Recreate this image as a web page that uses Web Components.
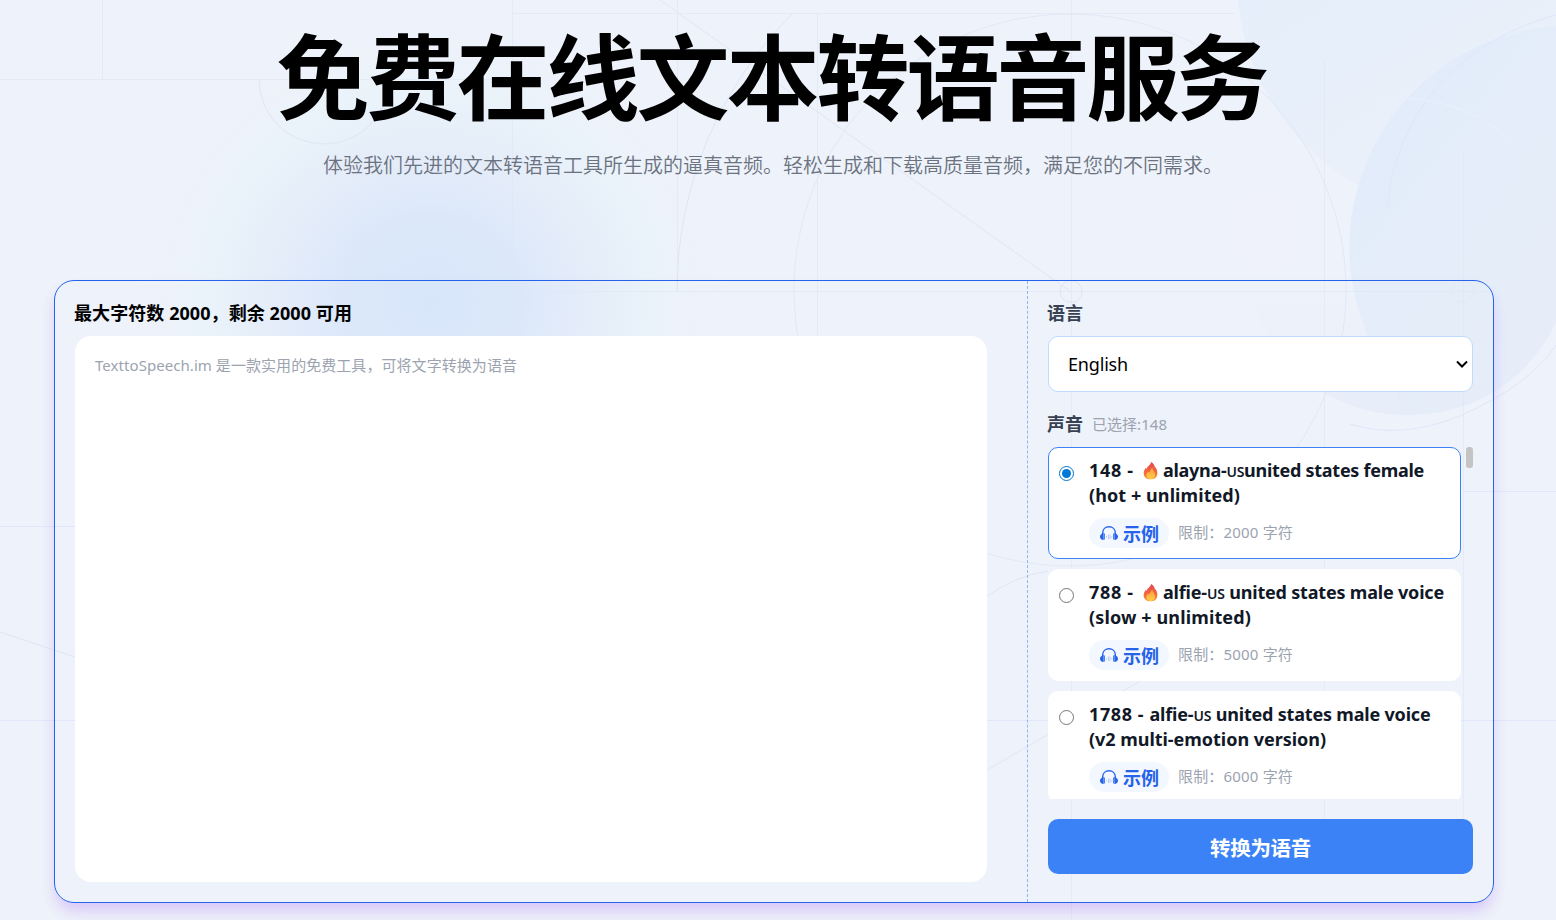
<!DOCTYPE html>
<html lang="zh-CN">
<head>
<meta charset="utf-8">
<title>免费在线文本转语音服务</title>
<style>
  body {
    margin: 0;
    width: 1556px;
    height: 920px;
    overflow: hidden;
    background: #eef2fa;
    font-family: "Noto Sans", "Noto Sans CJK SC", sans-serif;
  }
</style>
</head>
<body>
<tts-page>
  <tts-hero>
    <fit-text slot="title" width="990">免费在线文本转语音服务</fit-text>
    <fit-text slot="subtitle" width="900">体验我们先进的文本转语音工具所生成的逼真音频。轻松生成和下载高质量音频，满足您的不同需求。</fit-text>
  </tts-hero>
  <tts-card>
    <tts-editor slot="editor">
      <fit-text slot="label" width="278">最大字符数 2000，剩余 2000 可用</fit-text>
      <fit-text width="422">TexttoSpeech.im 是一款实用的免费工具，可将文字转换为语音</fit-text>
    </tts-editor>
    <tts-language slot="settings" label="语言"><fit-text width="60">English</fit-text></tts-language>
    <tts-voices slot="settings" label="声音" selected="148">
      <voice-item number="148" hot checked name="alayna-" rest="united states female" w1="261" line2="(hot + unlimited)" w2="151" limit="2000"></voice-item>
      <voice-item number="788" hot name="alfie-" rest=" united states male voice" w1="281" line2="(slow + unlimited)" w2="162" limit="5000"></voice-item>
      <voice-item number="1788" name="alfie-" rest=" united states male voice" w1="281" line2="(v2 multi-emotion version)" w2="237" limit="6000"></voice-item>
    </tts-voices>
    <tts-button slot="settings"><fit-text width="101">转换为语音</fit-text></tts-button>
  </tts-card>
</tts-page>

<script>
class BaseElement extends HTMLElement {
  constructor() {
    super();
    this._shadowRoot = this.attachShadow({ mode: 'open' });
  }

  connectedCallback() {
    this.render();
  }

  attr(name) {
    return this.getAttribute(name) || '';
  }
}

class TtsPage extends BaseElement {
  render() {
    this._shadowRoot.innerHTML = `
      <style>
        :host {
          display: flex;
          flex-direction: column;
          align-items: center;
          position: relative;
          box-sizing: border-box;
          width: 1556px;
          height: 920px;
          padding-right: 8px;
          overflow: hidden;
        }
        page-backdrop {
          position: absolute;
          inset: 0;
          z-index: -1;
        }
      </style>
      <page-backdrop></page-backdrop>
      <slot></slot>
    `;
  }
}

class PageBackdrop extends BaseElement {
  render() {
    this._shadowRoot.innerHTML = `
      <style>
        :host { display: block; }
        svg { display: block; }
      </style>
      <svg width="1556" height="920" viewBox="0 0 1556 920" fill="none">
        <defs>
          <radialGradient id="glow">
            <stop offset="0" stop-color="#d8e6fa"/>
            <stop offset=".3" stop-color="#dce8fa"/>
            <stop offset=".5" stop-color="#e4ecf9"/>
            <stop offset=".78" stop-color="#ebf3fa"/>
            <stop offset="1" stop-color="#eef2fa" stop-opacity="0"/>
          </radialGradient>
          <linearGradient id="top" x1="0" y1="0" x2=".6" y2="1">
            <stop offset="0" stop-color="#e3eefb"/>
            <stop offset=".6" stop-color="#e7effa"/>
            <stop offset="1" stop-color="#edf2fa"/>
          </linearGradient>
          <linearGradient id="ball" x1="0" y1="0" x2=".7" y2="1">
            <stop offset="0" stop-color="#dfeafb"/>
            <stop offset=".5" stop-color="#e4edf9"/>
            <stop offset="1" stop-color="#e6edf9"/>
          </linearGradient>
          <linearGradient id="ring" x1="0" y1="0" x2="0" y2="1">
            <stop offset=".6" stop-color="#e8eff9" stop-opacity="0"/>
            <stop offset="1" stop-color="#e6edf9"/>
          </linearGradient>
        </defs>
        <ellipse cx="430" cy="300" rx="300" ry="280" fill="url(#glow)"/>
        <circle cx="1475" cy="-22" r="238" fill="url(#top)"/>
        <circle cx="1405" cy="257" r="158" fill="url(#ring)"/>
        <path d="M1556 26A222 222 0 0 0 1398 386L1398 414A158 158 0 0 0 1556 322Z" fill="url(#ball)"/>
        <circle cx="1264" cy="230" r="42" fill="#f0f2fa" opacity=".6"/>
        <g stroke="#dfe6f4">
          <path d="M0 79.500H500M512 13.500H1235M540 291.500H1490" opacity=".65"/>
          <path d="M0 526.500H75M0 720.500H1556M1463 491.500H1556" stroke="#dde4fa" opacity=".8"/>
          <path d="M102.500 0V79M512.500 0V335M677.500 0V291M817.500 13V335M1071.500 0V920M1324.500 60V820M1463.500 150V820" opacity=".6"/>
          <path d="M660 0L1071 292M0 632L75 657M987 770L1140 681"/>
          <path d="M259 79A65 65 0 0 0 389 79"/>
          <circle cx="1070" cy="290" r="276" opacity=".8"/>
          <path d="M677 290A393 393 0 0 1 793 13M987 596Q1018 575 1048 571"/>
          <circle cx="1071" cy="291.500" r="11"/>
          <circle cx="1463" cy="291.500" r="11" opacity=".6"/>
          <path d="M1556 15C1450 45 1395 120 1387 210M1350 424Q1400 440 1460 416Q1530 385 1556 345" stroke="#dbe5f8" opacity=".9"/>
        </g>
        <path d="M1370 102A158 158 0 0 1 1510 140" stroke="#eaf1fa"/>
      </svg>
    `;
  }
}

// Spreads its text over a given width by adjusting the letter spacing.
// The template stays on one line because the host keeps white space.
class FitText extends BaseElement {
  render() {
    this._shadowRoot.innerHTML = '<style>:host { display: inline-block; white-space: pre; }</style><slot></slot>';
    this.fit();
    requestAnimationFrame(() => this.fit());
  }

  fit() {
    const width = parseFloat(this.getAttribute('width'));
    if (!width) return;
    this.style.letterSpacing = '0px';
    const natural = this.getBoundingClientRect().width;
    const count = [...this.textContent].length;
    this.style.letterSpacing = `${(width - natural) / count}px`;
  }
}

class TtsHero extends BaseElement {
  render() {
    this._shadowRoot.innerHTML = `
      <style>
        :host {
          display: flex;
          flex-direction: column;
          align-items: center;
          height: 280px;
          flex: none;
        }
        h1 {
          margin: 17px 0 0;
          padding-right: 5px;
          height: 120px;
          font-size: 93px;
          line-height: 120px;
          font-weight: 700;
          color: #000;
        }
        p {
          margin: 14px 0 0;
          padding-right: 2px;
          font-size: 20px;
          line-height: 30px;
          font-weight: 350;
          color: #6b7280;
        }
      </style>
      <h1><slot name="title"></slot></h1>
      <p><slot name="subtitle"></slot></p>
    `;
  }
}

class TtsCard extends BaseElement {
  render() {
    this._shadowRoot.innerHTML = `
      <style>
        :host {
          display: flex;
          flex: none;
          box-sizing: border-box;
          width: 1440px;
          height: 623px;
          border: 1px solid #2563eb;
          border-radius: 20px;
          box-shadow: 0 10px 15px -3px rgba(168, 85, 247, .22), 0 8px 14px rgba(139, 92, 246, .07);
        }
        .left {
          box-sizing: border-box;
          width: 973px;
          padding: 20px 40px 20px 20px;
          border-right: 1px dashed #93b4ee;
        }
        .right {
          flex: 1;
          display: flex;
          flex-direction: column;
          padding: 20px 20px 28px;
        }
      </style>
      <div class="left"><slot name="editor"></slot></div>
      <div class="right"><slot name="settings"></slot></div>
    `;
  }
}

class TtsEditor extends BaseElement {
  render() {
    this._shadowRoot.innerHTML = `
      <style>
        :host {
          display: flex;
          flex-direction: column;
          height: 100%;
        }
        .label {
          height: 35px;
          margin-left: -1px;
          font-size: 18px;
          line-height: 25px;
          font-weight: 700;
          color: #000;
        }
        .area {
          flex: 1;
          box-sizing: border-box;
          padding: 17px 20px;
          background: #fff;
          border-radius: 16px;
          font-size: 15px;
          line-height: 25px;
          color: #9ca3af;
        }
      </style>
      <div class="label"><slot name="label"></slot></div>
      <div class="area"><slot></slot></div>
    `;
  }
}

class TtsLanguage extends BaseElement {
  render() {
    this._shadowRoot.innerHTML = `
      <style>
        :host { display: block; }
        label {
          display: block;
          height: 35px;
          margin-left: -1px;
          font-size: 18px;
          line-height: 25px;
          font-weight: 700;
          color: #374151;
        }
        .select {
          display: flex;
          align-items: center;
          justify-content: space-between;
          box-sizing: border-box;
          height: 56px;
          padding: 0 4px 0 19px;
          border: 1px solid #bfdbfe;
          border-radius: 10px;
          background: #fff;
          font-size: 18px;
          color: #000;
        }
      </style>
      <label>${this.attr('label')}</label>
      <div class="select">
        <slot></slot>
        <svg width="12" height="8" viewBox="0 0 12 8" fill="none" stroke="#000" stroke-width="2"><path d="M1 1.500L6 6.500L11 1.500"/></svg>
      </div>
    `;
  }
}

class TtsVoices extends BaseElement {
  render() {
    this._shadowRoot.innerHTML = `
      <style>
        :host { display: block; margin-top: 20px; }
        .head {
          display: flex;
          gap: 9px;
          height: 35px;
          margin-left: -1px;
          line-height: 25px;
        }
        b { font-size: 18px; color: #374151; }
        .count { font-size: 15px; color: #9ca3af; }
        .body {
          display: flex;
          justify-content: space-between;
          height: 352px;
          overflow: hidden;
        }
        .list {
          display: flex;
          flex-direction: column;
          gap: 10px;
          width: 413px;
          border-radius: 0 0 3px 3px;
          overflow: hidden;
        }
        .thumb {
          width: 7px;
          height: 21px;
          border-radius: 3px;
          background: #c4c4c4;
        }
      </style>
      <div class="head">
        <b>${this.attr('label')}</b>
        <span class="count"><fit-text width="75">已选择:${this.attr('selected')}</fit-text></span>
      </div>
      <div class="body">
        <div class="list"><slot></slot></div>
        <div class="thumb"></div>
      </div>
    `;
  }
}

class VoiceItem extends BaseElement {
  render() {
    const hot = this.hasAttribute('hot');
    const number = this.attr('number');
    const numberWidth = number.length > 3 ? 60.5 : 50;

    this._shadowRoot.innerHTML = `
      <style>
        :host {
          display: flex;
          flex: none;
          gap: 15px;
          box-sizing: border-box;
          height: 112px;
          padding: 10px;
          border: 1px solid #fff;
          border-radius: 10px;
          background: #fff;
        }
        :host([checked]) { border-color: #3b82f6; }
        .radio {
          flex: none;
          display: flex;
          align-items: center;
          justify-content: center;
          box-sizing: border-box;
          width: 15px;
          height: 15px;
          margin-top: 8px;
          border: 1px solid #767676;
          border-radius: 50%;
        }
        :host([checked]) .radio { border-color: #0075d0; }
        :host([checked]) .radio::after {
          content: "";
          width: 9px;
          height: 9px;
          border-radius: 50%;
          background: #0078d7;
        }
        .line {
          display: flex;
          height: 25px;
          font-size: 18px;
          line-height: 25px;
          font-weight: 700;
          color: #111827;
        }
        .flame { width: 24px; }
        small { font-size: 14px; font-weight: 600; }
        .foot {
          display: flex;
          align-items: center;
          gap: 9px;
          margin-top: 10px;
        }
        .sample {
          display: flex;
          align-items: center;
          gap: 5px;
          box-sizing: border-box;
          width: 80px;
          height: 30px;
          padding-left: 11px;
          border-radius: 15px;
          background: #f3f7ff;
          font-size: 18px;
          font-weight: 700;
          color: #2563eb;
        }
        .sample fit-text { margin-top: -1px; }
        .limit { font-size: 15px; line-height: 25px; margin-top: -2px; color: #9ca3af; }
      </style>
      <span class="radio"></span>
      <div>
        <div class="line"><fit-text width="${numberWidth}">${number} - </fit-text>${hot ? '<span class="flame"><flame-icon></flame-icon></span>' : ''}<fit-text width="${this.attr('w1')}">${this.attr('name')}<small>US</small>${this.attr('rest')}</fit-text></div>
        <div class="line"><fit-text width="${this.attr('w2')}">${this.attr('line2')}</fit-text></div>
        <div class="foot">
          <span class="sample"><headphone-icon></headphone-icon><fit-text width="36">示例</fit-text></span>
          <span class="limit"><fit-text width="115">限制：${this.attr('limit')} 字符</fit-text></span>
        </div>
      </div>
    `;
  }
}

class FlameIcon extends BaseElement {
  render() {
    this._shadowRoot.innerHTML = `
      <style>
        :host { display: block; padding: 4px 0 0 4px; }
        svg { display: block; }
      </style>
      <svg width="15" height="18" viewBox="0 0 15 18">
        <defs>
          <linearGradient id="outer" x1="0" y1="0" x2="0" y2="1">
            <stop offset="0" stop-color="#e2464f"/>
            <stop offset=".55" stop-color="#f1673d"/>
            <stop offset="1" stop-color="#f98c2c"/>
          </linearGradient>
          <linearGradient id="inner" x1="0" y1="0" x2="0" y2="1">
            <stop offset="0" stop-color="#fb9a3c"/>
            <stop offset="1" stop-color="#ffd044"/>
          </linearGradient>
        </defs>
        <path d="M8 0C10.500 1.200 11.800 3.300 12 5.800L12.600 5.300C14 7.500 14.700 10 14.200 12.500C13.600 15.800 11 17.300 7.500 17.300C3.800 17.300 .8 15 .7 11.500C.6 9 1.700 7.800 2.400 6L3.400 7C4.300 3.800 7.900 3.200 8 0Z" fill="url(#outer)"/>
        <path d="M9.500 5.500C9.200 8 12 9.500 12.200 12.500C12.400 15.400 10 17 7.500 17C5 17 3.300 15.500 3.300 13.300C3.300 11.500 4.500 10.800 4.900 9.500L5.900 10.500C7.600 9.500 7.400 7 9.500 5.500Z" fill="url(#inner)"/>
      </svg>
    `;
  }
}

class HeadphoneIcon extends BaseElement {
  render() {
    this._shadowRoot.innerHTML = `
      <style>
        :host { display: block; }
        svg { display: block; }
      </style>
      <svg width="18" height="15" viewBox="0 0 18 15" fill="none" stroke="#2563eb">
        <path d="M2.700 8V6.800C2.700 3.200 5.400 .8 9 .8S15.300 3.200 15.300 6.800V8" stroke-width="1.400"/>
        <path d="M3.600 7C1.400 7.500 0 9 0 10.800S1.400 14 3.600 14ZM14.400 7C16.600 7.500 18 9 18 10.800S16.600 14 14.400 14Z" fill="#2563eb" stroke="none"/>
        <path d="M4.300 7.500V13.500M13.700 7.500V13.500" stroke-width="1"/>
        <path d="M6.500 10V11.500M8.500 8.500V13M10 8.500V13M11.800 10V11.500" stroke="#a9c1f7" stroke-width=".8"/>
      </svg>
    `;
  }
}

class TtsButton extends BaseElement {
  render() {
    this._shadowRoot.innerHTML = `
      <style>
        :host {
          display: flex;
          align-items: center;
          justify-content: center;
          height: 55px;
          margin-top: 20px;
          border-radius: 10px;
          background: #3b82f6;
          color: #fff;
          font-size: 20.500px;
          font-weight: 700;
        }
      </style>
      <slot></slot>
    `;
  }
}

customElements.define('page-backdrop', PageBackdrop);
customElements.define('flame-icon', FlameIcon);
customElements.define('headphone-icon', HeadphoneIcon);
customElements.define('tts-page', TtsPage);
customElements.define('tts-hero', TtsHero);
customElements.define('tts-card', TtsCard);
customElements.define('tts-editor', TtsEditor);
customElements.define('tts-language', TtsLanguage);
customElements.define('tts-voices', TtsVoices);
customElements.define('voice-item', VoiceItem);
customElements.define('tts-button', TtsButton);
customElements.define('fit-text', FitText);
</script>
</body>
</html>
